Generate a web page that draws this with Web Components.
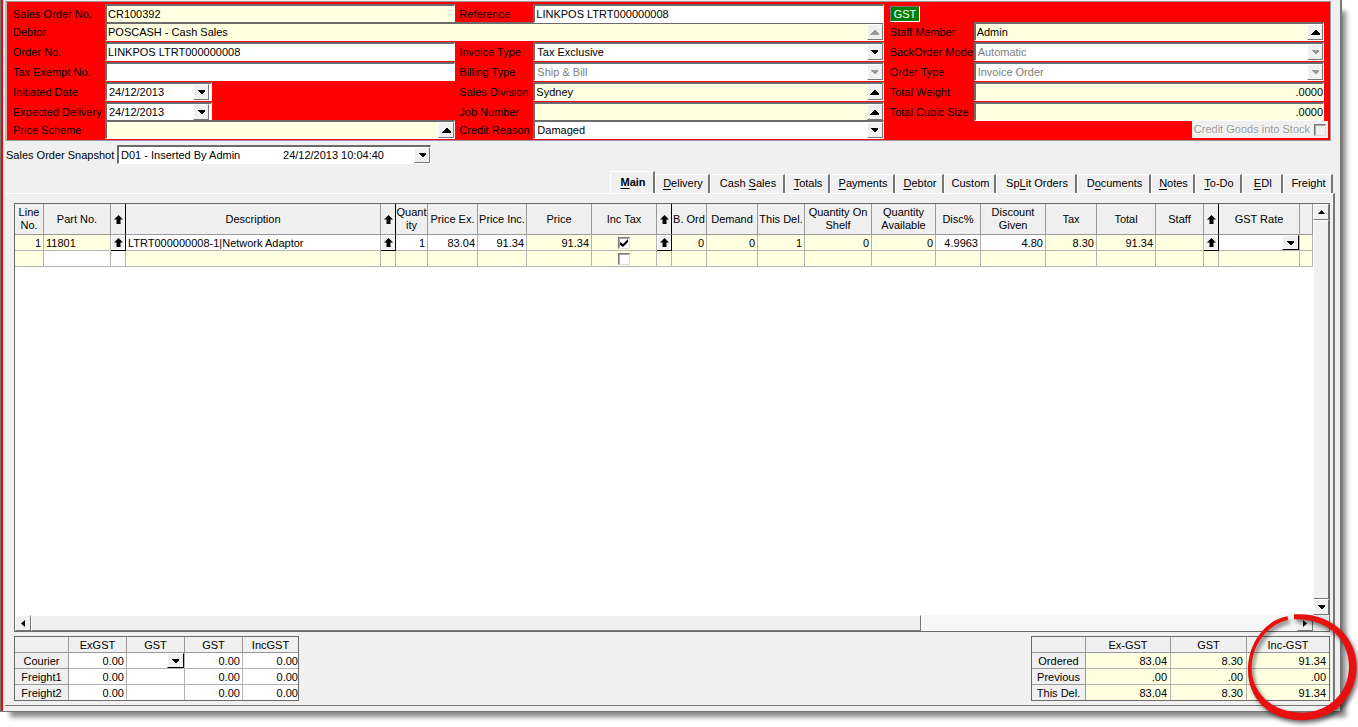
<!DOCTYPE html>
<html lang="en">
<head>
<meta charset="utf-8">
<title>Sales Order</title>
<style>
html, body { margin: 0; background: #fff; }
body { font: 11px/13px "Liberation Sans", Arial, sans-serif; color: #000; }
</style>
</head>
<body>
<sales-window></sales-window>
<script>
const BASE = `
*{box-sizing:border-box}
input,select,button{font:inherit;color:inherit;margin:0;padding:0;border:0;border-radius:0;background:none;outline:0;min-width:0}
select{appearance:none}
input[type=checkbox]{appearance:none;display:block;width:12px;height:12px;background:#fff;border:1px solid;border-color:#777 #ddd #ddd #777;box-shadow:inset 1px 1px #aaa}
svg{display:block}`;
const UP = '<svg width="9" height="5" viewBox="0 0 9 5" shape-rendering="crispEdges"><path d="M4 0h1l4 4v1H0V4z" fill="currentColor"/></svg>';
const DOWN = '<svg width="7" height="4" viewBox="0 0 7 4" shape-rendering="crispEdges"><path d="M0 0h7v1L4 4H3L0 1z" fill="currentColor"/></svg>';
const ARROW = '<svg width="9" height="9" viewBox="0 0 9 9"><path d="M4.5 0 9 4.5H6.5V9h-4V4.500H0z" fill="#000"/></svg>';
const define = (name, css, html) => customElements.define(name, class extends HTMLElement {
  constructor() { super(); this.attachShadow({ mode: 'open' }); }
  connectedCallback() {
    this.shadowRoot.innerHTML = `<style>${BASE}${css}</style>${typeof html === 'function' ? html(this) : html}`;
  }
});

/* A label and its control; both take part in the parent's grid. */
define('form-field', `
:host{display:contents}
label{grid-row:var(--row);grid-column:var(--col);align-self:start;height:20px;line-height:20px;white-space:nowrap;padding-left:var(--indent,6px)}
.box{grid-row:var(--row);grid-column:var(--to);display:flex;position:relative;height:19px;background:#fff;border:1px solid;border-width:2px 1px 1px 2px;border-color:#6b6b6b #fff #fff #6b6b6b}
.box.y{background:#ffffe1}
.box.date{width:107px;padding-right:2px}
input,select{flex:1;width:100%;height:16px;padding:0 1px;text-overflow:ellipsis}
select,.date input{padding-left:2px}
:host([num]) input{text-align:right;padding-right:0}
.off{color:#808080}
.dis .btn{color:#999}
.btn{display:flex;align-items:center;justify-content:center;flex:none;width:16px;height:16px;background:#f0f0f0;border:1px solid;border-color:#fff #777 #777 #fff}
span.btn{position:absolute;right:0;top:0;pointer-events:none}`,
el => {
  const k = el.getAttribute('kind') || 'text', v = el.getAttribute('value') || '', off = el.hasAttribute('off'), lbl = el.getAttribute('label');
  const cls = ['box', el.hasAttribute('y') ? 'y' : '', k, off ? 'dis' : ''].join(' ');
  const input = `<input id="c" type="text" value="${v}">`;
  const ctl = k === 'select'
    ? `<select id="c" class="${off ? 'off' : ''}" style="opacity:1" ${off ? 'disabled' : ''}><option>${v}</option></select><span class="btn">${DOWN}</span>`
    : k === 'date' ? `${input}<button class="btn" aria-label="Pick ${lbl}">${DOWN}</button>`
    : k === 'lookup' ? `${input}<button class="btn" aria-label="Look up ${lbl}">${UP}</button>` : input;
  return `<label for="c">${lbl}</label><div class="${cls}">${ctl}</div>`;
});

define('order-header', `
:host{display:grid;margin:0 9px 0 2px;padding:2px 2px 0 0;background:#f00;border:1px solid #999;border-left:2px solid #bbb;
grid-template-columns:98px minmax(0,1fr) 78px minmax(0,1fr) 90px minmax(0,1fr) 4px;grid-template-rows:18px repeat(4,20px) 18px 20px}
.gst{grid-row:1;grid-column:5;justify-self:start;align-self:end;margin-left:6px;height:16px;line-height:14px;padding:0 3px;background:#008000;color:#fff;border:1px solid;border-color:#777 #fff #fff #777}
.credit{grid-row:7;grid-column:5/8;justify-self:end;display:flex;align-items:center;gap:4px;height:17px;margin-top:1px;padding:0 2px;background:#f0f0f0;color:#999;text-shadow:1px 1px #fff}
.credit input{background:#f0f0f0}`,
() => {
  const cols = { 1: [[1, 2, 6], [
      [1, 'Sales Order No.', 'text', 'CR100392', 'y'], [2, 'Debtor', 'lookup', 'POSCASH - Cash Sales', 'y off'],
      [3, 'Order No.', 'text', 'LINKPOS LTRT000000008', ''], [4, 'Tax Exempt No.', 'text', '', ''],
      [5, 'Initiated Date', 'date', '24/12/2013', ''], [6, 'Expected Delivery', 'date', '24/12/2013', ''], [7, 'Price Scheme', 'lookup', '', 'y']]],
    2: [[3, 4, 4], [
      [1, 'Reference', 'text', 'LINKPOS LTRT000000008', ''], [3, 'Invoice Type', 'select', 'Tax Exclusive', ''],
      [4, 'Billing Type', 'select', 'Ship &amp; Bill', 'off'], [5, 'Sales Division', 'lookup', 'Sydney', 'y'],
      [6, 'Job Number', 'lookup', '', 'y'], [7, 'Credit Reason', 'select', 'Damaged', '']]],
    3: [[5, 6, 6], [
      [2, 'Staff Member', 'lookup', 'Admin', 'y'], [3, 'BackOrder Mode', 'select', 'Automatic', 'off'],
      [4, 'Order Type', 'select', 'Invoice Order', 'off'], [5, 'Total Weight', 'text', '.0000', 'y num'], [6, 'Total Cubic Size', 'text', '.0000', 'y num']]] };
  return Object.values(cols).map(([[c, t, ind], fs]) => fs.map(([r, l, k, v, a]) =>
    `<form-field label="${l}" kind="${k}" value="${v}" ${a} style="--row:${r};--col:${c};--to:${l === 'Debtor' ? '2/5' : t};--indent:${ind}px"></form-field>`).join('')).join('')
    + '<div class="gst">GST</div><label class="credit">Credit Goods into Stock<input type="checkbox" disabled></label>';
});

define('order-snapshot', `:host{display:grid;grid-template-columns:113px 314px;padding:4px 0 6px 1px}`,
() => `<form-field label="Sales Order Snapshot" kind="select" value="D01 - Inserted By Admin${'&nbsp;'.repeat(14)}24/12/2013 10:04:40" style="--row:1;--col:1;--to:2;--indent:2px"></form-field>`);

define('tab-bar', `
:host{display:flex;justify-content:flex-end;align-items:flex-end;height:22px;margin-right:7px}
button{height:19px;padding:0 0 1px 2px;border:1px solid;border-width:1px 2px 0 1px;border-color:#fff #777 #fff #fff;background:#f0f0f0;white-space:nowrap}
button.on{height:22px;font-weight:bold;padding-bottom:1px}
u{text-underline-offset:2px}`,
() => [['<u>M</u>ain', 45], ['<u>D</u>elivery', 55], ['Cash <u>S</u>ales', 75], ['<u>T</u>otals', 45], ['<u>P</u>ayments', 65], ['<u>D</u>ebtor', 49], ['Custom', 52], ['Sp<u>L</u>it Orders', 81], ['D<u>o</u>cuments', 74], ['<u>N</u>otes', 44], ['<u>T</u>o-Do', 47], ['<u>E</u>DI', 41], ['Freight', 50]]
  .map(([t, w], i) => `<button class="${i ? '' : 'on'}" style="width:${w}px">${t}</button>`).join(''));

const TABLE = `
table{border-collapse:separate;border-spacing:0;table-layout:fixed}
th,td{padding:0;font-weight:normal;height:16px;line-height:13px;border:0 solid #b4b4b4;border-width:0 1px 1px 0;overflow:hidden;white-space:nowrap}
th{background:#f0f0f0;border-color:#999}
td{background:#ffffe1}
td.w{background:#fff}
td.t,td.n,th{padding-top:2px}
td.t{padding-left:2px}
td.n{text-align:right;padding-right:2px}
.dd{position:relative;display:block;height:15px}
.dd select{display:block;width:100%;height:15px}
.dd span{position:absolute;right:0;top:0;width:17px;height:15px;display:flex;align-items:center;justify-content:center;background:#f0f0f0;border:1px solid;border-color:#fff #000 #000 #fff;pointer-events:none}`;

define('order-lines', TABLE + `
:host{display:grid;grid-template-columns:minmax(0,1fr) 16px;grid-template-rows:minmax(0,1fr) 16px;background:#fff;border:1px solid #6b6b6b}
.view{overflow:hidden;min-height:200px}
table{width:100%}
thead th{height:31px;padding-top:0;white-space:normal}
th.a{border-color:#000;border-bottom-color:#999}
th.a svg,td.a svg{margin:auto}
td.a{border-color:#000}
td.a button{display:block;width:100%;height:15px;background:#f0f0f0;border:1px solid #fff}
.ck{position:relative;display:block;width:12px;margin:0 auto}
.ck svg{position:absolute;left:2px;top:2px;pointer-events:none}
.v,.h{display:flex;background:#f7f7f7}
.v{flex-direction:column}
.v button,.h button{flex:none;width:16px;height:16px;display:flex;align-items:center;justify-content:center;background:#f0f0f0;border:1px solid;border-color:#fff #777 #777 #fff}
.thumb{flex:1;background:#f0f0f0;border:1px solid;border-color:#fff #777 #777 #fff}
.h .thumb{flex:889}
.h i{flex:377}
.corner{background:#e8e8e8}`,
() => {
  const A = 'a';
  const cols = [['Line No.', 29], ['Part No.', 67], [A, 15], ['Description', 0], [A, 15], ['Quant ity', 32], ['Price Ex.', 50], ['Price Inc.', 49], ['Price', 65], ['Inc Tax', 65], [A, 15], ['B. Ord', 35], ['Demand', 51], ['This Del.', 47], ['Quantity On Shelf', 67], ['Quantity Available', 64], ['Disc%', 45], ['Discount Given', 65], ['Tax', 51], ['Total', 59], ['Staff', 48], [A, 15], ['GST Rate', 81], ['', 13]];
  const row = ['1', '11801', A, 'LTRT000000008-1|Network Adaptor', A, '1', '83.04', '91.34', '91.34', 'ck', A, '0', '0', '1', '0', '0', '4.9963', '4.80', '8.30', '91.34', '', A, 'dd', ''];
  const white = new Set([3, 5, 6, 7, 16, 17, 22]), white2 = new Set([1, 2]);
  const tick = '<svg width="8" height="8" viewBox="0 0 8 8"><path d="M0 3v3l3 2 5-5V0L3 5z" fill="#000"/></svg>';
  const cell = (v, i) => v === A ? `<td class="a"><button aria-label="Look up">${ARROW}</button></td>`
    : v === 'ck' ? `<td><span class="ck"><input type="checkbox" checked aria-label="Inc Tax">${tick}</span></td>`
    : v === 'dd' ? `<td class="w"><span class="dd"><select aria-label="GST Rate"><option></option></select><span>${DOWN}</span></span></td>`
    : `<td class="${white.has(i) ? 'w' : ''} ${i === 1 || i === 3 ? 't' : 'n'}">${v}</td>`;
  return `<div class="view"><table><colgroup>${cols.map(c => `<col${c[1] ? ` style="width:${c[1]}px"` : ''}>`).join('')}</colgroup>
  <thead><tr>${cols.map(c => c[0] === A ? `<th class="a">${ARROW}</th>` : `<th>${c[0] === 'Quant ity' ? 'Quant<br>ity' : c[0]}</th>`).join('')}</tr></thead>
  <tbody><tr>${row.map(cell).join('')}</tr>
  <tr>${row.map((v, i) => `<td class="${white2.has(i) ? 'w' : ''}">${v === 'ck' ? '<span class="ck"><input type="checkbox" aria-label="Inc Tax"></span>' : ''}</td>`).join('')}</tr></tbody></table></div>
  <div class="v"><button aria-label="Scroll up"><svg width="7" height="4" viewBox="0 0 7 4"><path d="M0 4 3.500 0 7 4z"/></svg></button><div class="thumb"></div><button aria-label="Scroll down">${DOWN}</button></div>
  <div class="h"><button aria-label="Scroll left"><svg width="4" height="7" viewBox="0 0 4 7"><path d="M4 0v7L0 3.500z"/></svg></button><div class="thumb"></div><i></i><button aria-label="Scroll right"><svg width="4" height="7" viewBox="0 0 4 7"><path d="M0 0v7l4-3.500z"/></svg></button></div>
  <div class="corner"></div>`;
});

const totals = (widths, heads, rows, cls) => `<table><colgroup>${widths.map(w => `<col style="width:${w}px">`).join('')}</colgroup>
<thead><tr>${heads.map(h => `<th>${h}</th>`).join('')}</tr></thead><tbody>${rows.map(([h, ...c]) => `<tr><th>${h}</th>${c.map(v => v === 'dd'
  ? `<td class="w"><span class="dd"><select aria-label="Courier GST"><option></option></select><span>${DOWN}</span></span></td>` : `<td class="n ${cls}">${v}</td>`).join('')}</tr>`).join('')}</tbody></table>`;
const TOT = TABLE + `:host{display:block;border:1px solid #6b6b6b}tr>:last-child{border-right-width:0}tbody tr:last-child>*{height:15px;border-bottom-width:0}td.n{padding-right:var(--pad,2px)}`;
define('freight-totals', TOT + `:host{width:285px}td.n:last-child{padding-right:0}table{width:283px}`,
  () => totals([54, 58, 58, 58, 55], ['', 'ExGST', 'GST', 'GST', 'IncGST'], [['Courier', '0.00', 'dd', '0.00', '0.00'], ['Freight1', '0.00', '', '0.00', '0.00'], ['Freight2', '0.00', '', '0.00', '0.00']], 'w'));
define('order-totals', TOT + `:host{width:299px;--pad:3px}table{width:297px}`,
  () => totals([54, 85, 76, 82], ['', 'Ex-GST', 'GST', 'Inc-GST'], [['Ordered', '83.04', '8.30', '91.34'], ['Previous', '.00', '.00', '.00'], ['This Del.', '83.04', '8.30', '91.34']], ''));

/* Hand-drawn ring that points out the inclusive totals. */
define('red-ring', `:host{position:absolute;right:-18px;bottom:-16px;width:120px;height:132px;pointer-events:none}svg{filter:drop-shadow(2px 3px 2px rgba(0,0,0,.55))}`,
  `<svg width="120" height="132" viewBox="0 0 360 396"><path fill="#e8110f" d="M168 58C280 50 356 128 356 213C356 312 280 376 190 376C96 376 30 312 30 225C30 140 85 74 149 64L150 75C93 88 40 145 41 223C44 300 108 352 190 353C270 353 333 296 333 213C333 135 272 70 168 73Z"/></svg>`);

define('sales-window', `
:host{display:flex;flex-direction:column;box-sizing:border-box;position:relative;min-height:calc(100vh - 15px);margin:0 16px 15px 0;padding:1px 0 0 2px;background:#f0f0f0;border:solid #777;border-width:0 2px 1px 1px;box-shadow:7px 8px 5px -3px #888}
:host::before{content:"";position:absolute;left:0;top:0;bottom:0;width:2px;background:#f00}
main{flex:1;display:flex;flex-direction:column;gap:4px;margin:0 5px 5px 2px;padding:9px 3px 4px 9px;border:1px solid;border-width:1px 2px 1px 0;border-color:#fff #777 #777 #fff}
order-lines{flex:1}
footer{display:flex;justify-content:space-between}`,
`<order-header></order-header><order-snapshot></order-snapshot><tab-bar></tab-bar>
<main><order-lines></order-lines><footer><freight-totals></freight-totals><order-totals></order-totals></footer></main><red-ring></red-ring>`);
</script>
</body>
</html>
